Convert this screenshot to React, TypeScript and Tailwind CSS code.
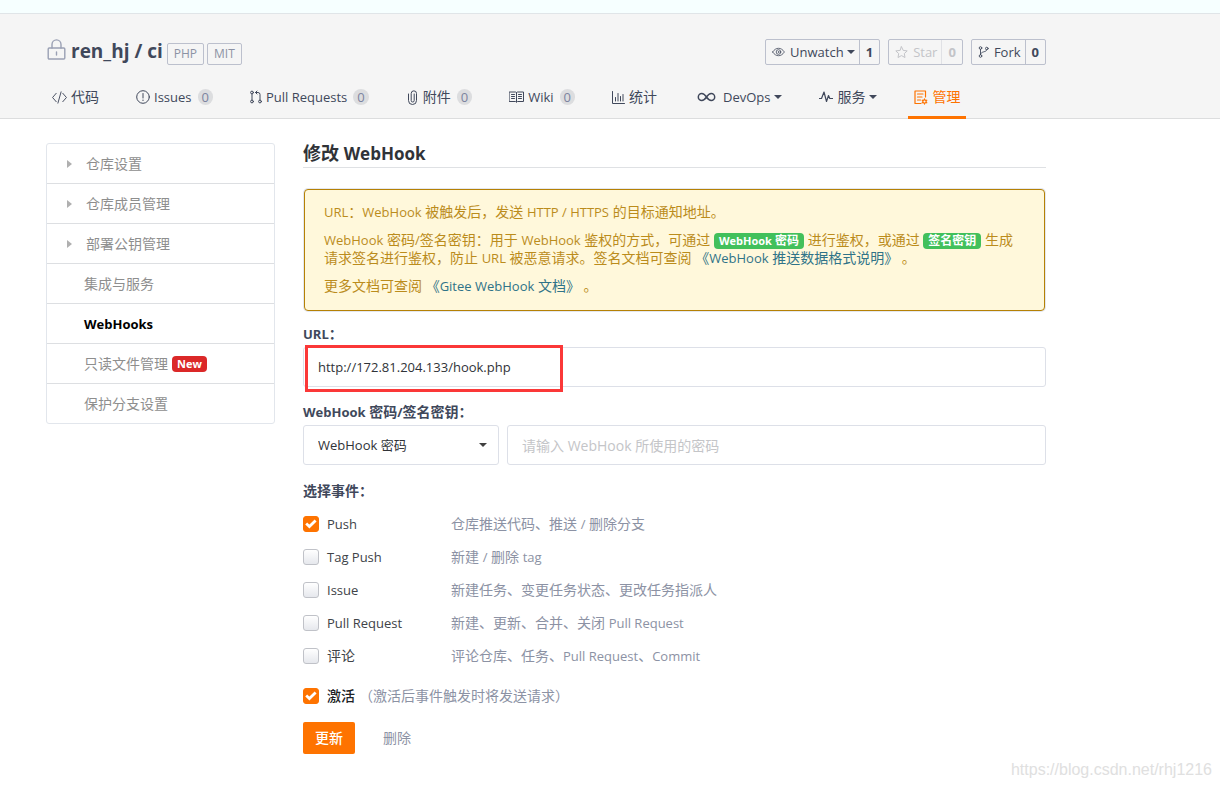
import React, { useState } from "react";

const LATIN = /([\x21-\x7e][\x20-\x7e]*[\x21-\x7e]|[\x21-\x7e])/;

/* Latin runs are set one step smaller than the Chinese text around them. */
function Mixed({ text, size = "text-[13px]" }: { text: string; size?: string }) {
  return (
    <>
      {text.split(LATIN).map((part, i) =>
        i % 2 === 1 ? (
          <span key={i} className={size}>
            {part}
          </span>
        ) : (
          part
        )
      )}
    </>
  );
}

function Icon({
  children,
  className,
  viewBox = "0 0 16 16",
}: {
  children: React.ReactNode;
  className: string;
  viewBox?: string;
}) {
  return (
    <svg
      viewBox={viewBox}
      className={`shrink-0 ${className}`}
      fill="none"
      stroke="currentColor"
      strokeWidth="1"
      strokeLinecap="round"
      strokeLinejoin="round"
      aria-hidden="true"
    >
      {children}
    </svg>
  );
}

function Caret({ className = "" }: { className?: string }) {
  return (
    <svg viewBox="0 0 8 4" className={`h-1 w-2 shrink-0 ${className}`} fill="currentColor" aria-hidden="true">
      <path d="M0 0H8L4 4Z" />
    </svg>
  );
}

const icons = {
  lock: (
    <Icon className="h-[26px] w-5 text-[#9aa0b4]" viewBox="-1 0 20 26">
      <g strokeWidth="1.4">
        <rect x="1.2" y="9" width="16.6" height="11" rx="1" />
        <path d="M5 9V5.400a4.500 4.500 0 0 1 9 0V9M9.500 13v3" />
      </g>
    </Icon>
  ),
  code: (
    <Icon className="h-[15px] w-[15px]">
      <path d="M4.500 3.500L.6 8l3.900 4.500M11.500 3.500L15.400 8l-3.900 4.500M9.700 2l-3.400 12" />
    </Icon>
  ),
  issue: (
    <Icon className="h-[14px] w-[14px]" viewBox="0 0 14 14">
      <circle cx="7" cy="7" r="6.300" />
      <path d="M7 3.500v4.500M7 10v.6" />
    </Icon>
  ),
  pull: (
    <Icon className="h-[14px] w-3" viewBox="0 0 12 14">
      <circle cx="2" cy="2.500" r="1.400" />
      <circle cx="2" cy="11.500" r="1.400" />
      <circle cx="10" cy="11.500" r="1.400" />
      <path d="M2 4v6M10 10V4.500a2 2 0 0 0-2-2H5.500M7 1L5.500 2.500 7 4" />
    </Icon>
  ),
  clip: (
    <Icon className="h-[15px] w-[13px]" viewBox="-1 0 13 15">
      <path d="M7.200 4v6.500a1.500 1.500 0 0 1-3 0V3.500a2.500 2.500 0 0 1 5.300 0v7a4 4 0 0 1-8 0V4" />
    </Icon>
  ),
  book: (
    <Icon className="h-3 w-[15px]" viewBox="0 0 15 12">
      <path d="M.5 1h6l1 .6 1-.6h6v9.500h-6l-1 .6-1-.6h-6ZM7.500 1.600V11M2.500 3.500h3M2.500 5.500h3M2.500 7.500h3M9.500 3.500h3M9.500 5.500h3M9.500 7.500h3" />
    </Icon>
  ),
  chart: (
    <Icon className="h-[13px] w-[13px]" viewBox="0 0 13 13">
      <path d="M.5.5v12h12M3.500 10v-3.500M6 10V2.500M8.500 10V5.500M11 10V3.500" />
    </Icon>
  ),
  infinity: (
    <Icon className="h-[10px] w-[25px]" viewBox="-3 0 25 10">
      <path
        strokeWidth="1.500"
        d="M9.500 5C8 2.800 6.800 1.500 4.800 1.500a3.500 3.500 0 0 0 0 7C6.800 8.500 8 7.200 9.500 5s2.700-3.500 4.700-3.500a3.500 3.500 0 0 1 0 7C12.200 8.500 11 7.200 9.500 5Z"
      />
    </Icon>
  ),
  pulse: (
    <Icon className="h-3 w-[14px]" viewBox="0 0 14 12">
      <path strokeWidth="1.200" d="M.5 7.500h2L5 1l2.500 9.500 2-6 1.300 3h2.700" />
    </Icon>
  ),
  manage: (
    <Icon className="h-[15px] w-[14px]" viewBox="0 0 14 15">
      <g strokeWidth="1.200">
        <path d="M11.500 7V1H1v12.500h6M3.500 4h5.500M3.500 7h4.500M3.500 10h3" />
        <circle cx="10.500" cy="11.500" r="1.700" />
        <path d="M10.500 8.900v.6M10.500 13.500v.6M8.200 10.200l.6.300M12.200 12.500l.6.300M12.800 10.200l-.6.300M8.800 12.500l-.6.300" />
      </g>
    </Icon>
  ),
  eye: (
    <Icon className="h-3 w-[13px]" viewBox="0 0 13 12">
      <g strokeWidth=".8">
        <path d="M.6 6C2.400 3.400 4.300 2.300 6.500 2.300S10.600 3.400 12.400 6C10.600 8.600 8.700 9.700 6.500 9.700S2.400 8.600.6 6Z" />
        <circle cx="6.500" cy="6" r="2.300" />
        <circle cx="6.500" cy="6" r=".4" />
      </g>
    </Icon>
  ),
  star: (
    <Icon className="h-3 w-[13px]" viewBox="0 0 13 12">
      <path d="M6.500.8l1.700 3.600 4 .5-2.900 2.700.7 3.900-3.500-1.900L3 11.500l.7-3.900L.8 4.900l4-.5Z" />
    </Icon>
  ),
  fork: (
    <Icon className="h-3 w-[11px]" viewBox="0 0 11 12">
      <g strokeWidth=".9">
        <circle cx="2.500" cy="2" r="1.300" />
        <circle cx="2.500" cy="10" r="1.300" />
        <circle cx="8.800" cy="2.500" r="1.300" />
        <path d="M2.500 3.300v5.400M8.800 3.800C8.800 6.500 2.500 5 2.500 8.500" />
      </g>
    </Icon>
  ),
};

type Tab = { icon: React.ReactNode; label: string; count?: number; menu?: boolean; active?: boolean };

const tabs: Tab[] = [
  { icon: icons.code, label: "代码" },
  { icon: icons.issue, label: "Issues", count: 0 },
  { icon: icons.pull, label: "Pull Requests", count: 0 },
  { icon: icons.clip, label: "附件", count: 0 },
  { icon: icons.book, label: "Wiki", count: 0 },
  { icon: icons.chart, label: "统计" },
  { icon: icons.infinity, label: "DevOps", menu: true },
  { icon: icons.pulse, label: "服务", menu: true },
  { icon: icons.manage, label: "管理", active: true },
];

const sections = [
  { label: "仓库设置", folds: true },
  { label: "仓库成员管理", folds: true },
  { label: "部署公钥管理", folds: true },
  { label: "集成与服务" },
  { label: "WebHooks", active: true },
  { label: "只读文件管理", fresh: true },
  { label: "保护分支设置" },
];

const events = [
  { id: "push", label: "Push", note: "仓库推送代码、推送 / 删除分支", on: true },
  { id: "tag", label: "Tag Push", note: "新建 / 删除 tag", on: false },
  { id: "issue", label: "Issue", note: "新建任务、变更任务状态、更改任务指派人", on: false },
  { id: "pr", label: "Pull Request", note: "新建、更新、合并、关闭 Pull Request", on: false },
  { id: "comment", label: "评论", note: "评论仓库、任务、Pull Request、Commit", on: false },
];

function Counter({
  icon,
  label,
  count,
  menu,
  disabled,
}: {
  icon: React.ReactNode;
  label: string;
  count: number;
  menu?: boolean;
  disabled?: boolean;
}) {
  return (
    <div
      className={`flex h-[26px] rounded-[2px] border border-[#bcc0cd] text-[13px] ${
        disabled ? "text-[#c3c4c8]" : "text-[#40485b]"
      }`}
    >
      <button type="button" disabled={disabled} className="flex items-center gap-[5px] pr-1 pl-[6px]">
        {icon}
        <span>{label}</span>
        {menu && <Caret className="-ml-[2px]" />}
      </button>
      <a
        href="#"
        className={`flex items-center border-l px-[6px] font-bold ${disabled ? "border-[#e0e1e5]" : "border-[#bcc0cd]"}`}
      >
        {count}
      </a>
    </div>
  );
}

function Check({ id, defaultChecked }: { id: string; defaultChecked: boolean }) {
  return (
    <span className="grid h-4 w-4 shrink-0">
      <input
        id={id}
        type="checkbox"
        defaultChecked={defaultChecked}
        className="peer col-start-1 row-start-1 h-4 w-4 appearance-none rounded-[3px] border border-[#c0c2c8] bg-linear-to-b from-white to-[#e6e8ed] checked:border-[#fe7300] checked:bg-[#fe7300] checked:bg-none"
      />
      <svg
        viewBox="0 0 16 16"
        className="pointer-events-none col-start-1 row-start-1 hidden h-4 w-4 peer-checked:block"
        fill="none"
        stroke="white"
        strokeWidth="2.800"
        aria-hidden="true"
      >
        <path d="M3.200 7.600l3.200 3L12.600 4.600" />
      </svg>
    </span>
  );
}

export default function App() {
  const [url, setUrl] = useState("http://172.81.204.133/hook.php");

  return (
    <div className="relative min-h-screen bg-white font-['Open_Sans','Noto_Sans_CJK_SC',sans-serif] text-sm text-[#40485b]">
      <div className="h-[14px] border-b border-[#e0e5e8] bg-[#f6ffff]" />
      <header className="border-b border-[#dcddde] bg-[#f5f5f5] pl-[46px]">
        <div className="w-full max-w-[1000px]">
          <div className="flex items-start justify-between pt-[25px]">
            <h1 className="flex h-[26px] items-center">
              {icons.lock}
              <span className="ml-[5px] text-[19px] font-bold">
                <a href="#">ren_hj</a> / <a href="#">ci</a>
              </span>
              <span className="ml-1 flex gap-[3px] pt-[3px] text-[12px] leading-5 text-[#8c92a4]">
                <a href="#" className="rounded-[2px] border border-[#bcc0cd] px-[6px]">PHP</a>
                <a href="#" className="rounded-[2px] border border-[#bcc0cd] px-[6px]">MIT</a>
              </span>
            </h1>
            <div className="flex gap-2">
              <Counter icon={icons.eye} label="Unwatch" count={1} menu />
              <Counter icon={icons.star} label="Star" count={0} disabled />
              <Counter icon={icons.fork} label="Fork" count={0} />
            </div>
          </div>
          <nav className="mt-[10px] -mb-px flex gap-[25px]">
            {tabs.map((t) => (
              <a
                key={t.label}
                href="#"
                className={`flex h-11 items-center gap-1 border-b-[3px] px-[6px] pt-[3px] whitespace-nowrap ${
                  t.active ? "border-[#fe7300] text-[#fe7300]" : "border-transparent"
                }`}
              >
                {t.icon}
                <span>
                  <Mixed text={t.label} />
                </span>
                {t.count !== undefined && (
                  <span className="ml-[2px] flex h-4 items-center rounded-full bg-[#dcdddf] px-1 text-[13px] text-[#7c84a0]">
                    {t.count}
                  </span>
                )}
                {t.menu && <Caret />}
              </a>
            ))}
          </nav>
        </div>
      </header>

      <div className="flex max-w-[1046px] items-start gap-7 pt-6 pl-[46px]">
        <aside className="w-[229px] shrink-0 rounded-[3px] border border-[#e2e6ec]">
          <ul className="divide-y divide-[#dddfe2]">
            {sections.map((s) => (
              <li key={s.label}>
                <a
                  href="#"
                  className={`flex h-[39px] items-center ${s.folds ? "pl-5" : "pl-[37px]"} ${
                    s.active ? "font-bold text-black" : "text-[#8e8e8e]"
                  }`}
                >
                  {s.folds && (
                    <svg viewBox="0 0 5 8" className="mr-[14px] h-2 w-[5px]" fill="#b0b0b0" aria-hidden="true">
                      <path d="M0 0L5 4L0 8Z" />
                    </svg>
                  )}
                  <span>
                    <Mixed text={s.label} />
                  </span>
                  {s.fresh && (
                    <span className="ml-1 rounded-[4px] bg-[#db2828] px-[5px] text-[11px] leading-4 font-bold text-white">
                      New
                    </span>
                  )}
                </a>
              </li>
            ))}
          </ul>
        </aside>

        <main className="min-w-0 flex-1">
          <h2 className="border-b border-[#dfe1e4] pb-[3px] text-[18px] leading-5 font-bold text-[#303338]">
            <Mixed text="修改 WebHook" size="text-[17px]" />
          </h2>

          <section className="mx-px mt-[21px] flex flex-col gap-[10px] rounded-[4px] border border-[#b58105] bg-[#fff8db] px-[19px] pt-[13px] pb-[15px] leading-[18px] text-[#bb8c1c] shadow-[0_0_0_1px_#e4e7ee]">
            <p>
              <Mixed text="URL：WebHook 被触发后，发送 HTTP / HTTPS 的目标通知地址。" />
            </p>
            <p>
              <Mixed text="WebHook 密码/签名密钥：用于 WebHook 鉴权的方式，可通过 " />
              <span className="inline-block rounded-[4px] bg-[#42c05b] px-[5px] text-[12px] leading-4 font-bold text-white">
                <Mixed text="WebHook 密码" size="text-[11px]" />
              </span>
              {" 进行鉴权，或通过 "}
              <span className="inline-block rounded-[4px] bg-[#42c05b] px-[5px] text-[12px] leading-4 font-bold text-white">
                签名密钥
              </span>
              <Mixed text=" 生成请求签名进行鉴权，防止 URL 被恶意请求。签名文档可查阅 " />
              <a href="#" className="text-[#2f7388]">
                <Mixed text="《WebHook 推送数据格式说明》" />
              </a>
              {" 。"}
            </p>
            <p>
              {"更多文档可查阅 "}
              <a href="#" className="text-[#2f7388]">
                <Mixed text="《Gitee WebHook 文档》" />
              </a>
              {" 。"}
            </p>
          </section>

          <form onSubmit={(e) => e.preventDefault()}>
            <label htmlFor="url" className="mt-[13px] block leading-5 font-bold">
              <Mixed text="URL：" />
            </label>
            <div className="relative mt-[3px]">
              <input
                id="url"
                type="text"
                value={url}
                onChange={(e) => setUrl(e.target.value)}
                className="block h-10 w-full rounded-[3px] border border-[#dde0e8] px-[14px] text-[13px] text-[#303338]"
              />
              <div className="pointer-events-none absolute -top-[2px] left-[2px] h-[47px] w-[258px] border-3 border-[#fb3838]" />
            </div>

            <label htmlFor="secret" className="mt-[15px] block leading-5 font-bold">
              <Mixed text="WebHook 密码/签名密钥：" />
            </label>
            <div className="mt-[3px] flex gap-2">
              <div className="relative w-[196px] shrink-0">
                <select
                  aria-label="验证方式"
                  className="h-10 w-full appearance-none rounded-[3px] border border-[#dde0e8] bg-white px-[14px] text-[13px] text-[#303338]"
                >
                  <option>WebHook 密码</option>
                  <option>签名密钥</option>
                </select>
                <Caret className="pointer-events-none absolute top-[18px] right-3 text-[#404040]" />
              </div>
              <input
                id="secret"
                type="text"
                placeholder="请输入 WebHook 所使用的密码"
                className="h-10 min-w-0 flex-1 rounded-[3px] border border-[#dde0e8] px-[14px] text-sm placeholder:text-[#c4c5c8]"
              />
            </div>

            <fieldset className="mt-4">
              <legend className="leading-5 font-bold">选择事件：</legend>
              <div className="mt-[6px]">
                {events.map((ev) => (
                  <div key={ev.id} className="flex h-[33px] items-center">
                    <Check id={ev.id} defaultChecked={ev.on} />
                    <label htmlFor={ev.id} className="w-[132px] shrink-0 pl-2 text-[#404348]">
                      <Mixed text={ev.label} />
                    </label>
                    <span className="text-[#8c92a4]">
                      <Mixed text={ev.note} />
                    </span>
                  </div>
                ))}
              </div>
            </fieldset>

            <div className="mt-[14px] flex h-5 items-center">
              <Check id="active" defaultChecked />
              <label htmlFor="active" className="pl-2 font-medium text-[#202225]">
                激活
              </label>
              <span className="ml-1 text-[#8c92a4]">（激活后事件触发时将发送请求）</span>
            </div>

            <div className="mt-4 flex items-center gap-7">
              <button type="submit" className="h-8 rounded-[2px] bg-[#fe7300] px-3 font-medium text-white">
                更新
              </button>
              <a href="#" className="text-[#8c92a4]">
                删除
              </a>
            </div>
          </form>
        </main>
      </div>

      <div className="absolute right-2 bottom-2 font-['Liberation_Sans',sans-serif] text-[16px] leading-5 text-[#e0e0e0]">
        https://blog.csdn.net/rhj1216
      </div>
    </div>
  );
}
